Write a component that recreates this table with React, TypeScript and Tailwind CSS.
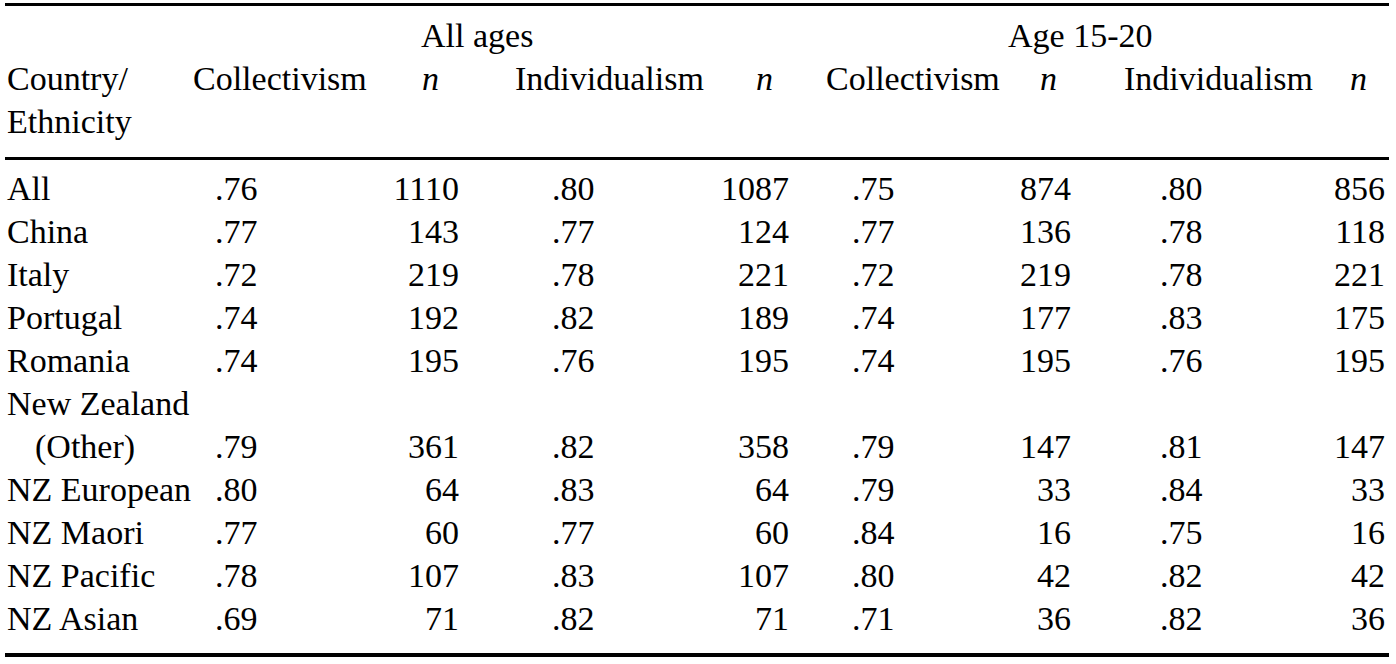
import React from "react";

type Row = { label: string; indent?: boolean; values?: string[] };

const rows: Row[] = [
  { label: "All", values: [".76", "1110", ".80", "1087", ".75", "874", ".80", "856"] },
  { label: "China", values: [".77", "143", ".77", "124", ".77", "136", ".78", "118"] },
  { label: "Italy", values: [".72", "219", ".78", "221", ".72", "219", ".78", "221"] },
  { label: "Portugal", values: [".74", "192", ".82", "189", ".74", "177", ".83", "175"] },
  { label: "Romania", values: [".74", "195", ".76", "195", ".74", "195", ".76", "195"] },
  { label: "New Zealand" },
  { label: "(Other)", indent: true, values: [".79", "361", ".82", "358", ".79", "147", ".81", "147"] },
  { label: "NZ European", values: [".80", "64", ".83", "64", ".79", "33", ".84", "33"] },
  { label: "NZ Maori", values: [".77", "60", ".77", "60", ".84", "16", ".75", "16"] },
  { label: "NZ Pacific", values: [".78", "107", ".83", "107", ".80", "42", ".82", "42"] },
  { label: "NZ Asian", values: [".69", "71", ".82", "71", ".71", "36", ".82", "36"] },
];

// body cell alignment per value column (c2..c9)
const valueCls = [
  "pl-[30px] text-left",
  "pr-[41px] text-right",
  "pl-[52px] text-left",
  "pr-[21px] text-right",
  "pl-[42px] text-left",
  "pr-[29px] text-right",
  "pl-[60px] text-left",
  "pr-[4px] text-right",
];

const headCls = ["pl-[8px]", "pl-[42px]", "pl-[15px]", "pl-[36px]", "pl-[16px]", "pl-[20px]", "pl-[24px]", "pl-[20px]"];
const headText = ["Collectivism", "n", "Individualism", "n", "Collectivism", "n", "Individualism", "n"];

export default function App() {
  return (
    <div className="min-h-screen bg-white pt-[3px] pl-[5px] text-black">
      <div className="w-[1384px] border-t-[3px] border-b-[4px] border-black font-['Liberation_Serif','Times_New_Roman',serif] text-[34px] leading-[43px]">
        <table className="w-[1384px] table-fixed border-collapse">
          <colgroup>
            <col className="w-[180px]" />
            <col className="w-[195px]" />
            <col className="w-[120px]" />
            <col className="w-[220px]" />
            <col className="w-[90px]" />
            <col className="w-[210px]" />
            <col className="w-[80px]" />
            <col className="w-[230px]" />
            <col className="w-[59px]" />
          </colgroup>
          <thead>
            <tr>
              <th className="pt-[8px]" />
              <th colSpan={4} className="whitespace-nowrap pt-[8px] pl-[236px] text-left font-normal">
                All ages
              </th>
              <th colSpan={4} className="whitespace-nowrap pt-[8px] pl-[198px] text-left font-normal">
                Age 15-20
              </th>
            </tr>
            <tr className="border-b-[3px] border-black">
              <th className="whitespace-nowrap pb-[14px] pl-[2px] text-left align-top font-normal">
                Country/
                <br />
                Ethnicity
              </th>
              {headText.map((t, i) => (
                <th
                  key={i}
                  className={`whitespace-nowrap pb-[14px] text-left align-top font-normal ${headCls[i]} ${t === "n" ? "italic" : ""}`}
                >
                  {t}
                </th>
              ))}
            </tr>
          </thead>
          <tbody>
            {rows.map((row, r) => {
              const pad = r === 0 ? "pt-[7px]" : r === rows.length - 1 ? "pb-[13px]" : "";
              return (
                <tr key={row.label}>
                  <td className={`whitespace-nowrap text-left ${row.indent ? "pl-[30px]" : "pl-[2px]"} ${pad}`}>{row.label}</td>
                  {valueCls.map((cls, i) => (
                    <td key={i} className={`whitespace-nowrap ${cls} ${pad}`}>
                      {row.values ? row.values[i] : ""}
                    </td>
                  ))}
                </tr>
              );
            })}
          </tbody>
        </table>
      </div>
    </div>
  );
}
